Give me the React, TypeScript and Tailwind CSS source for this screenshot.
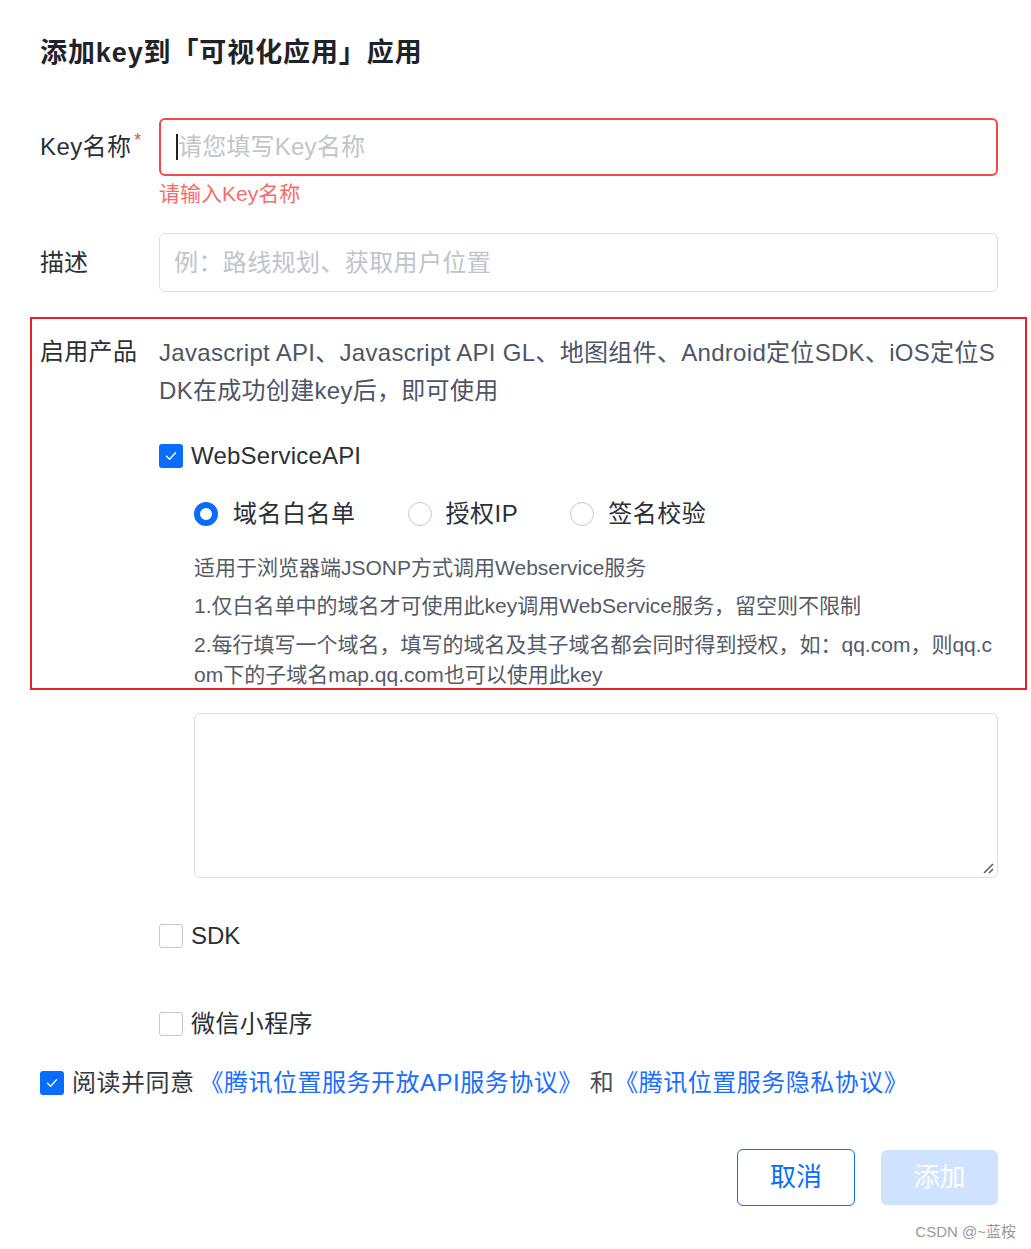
import React from "react";

const FONT = { fontFamily: '"Liberation Sans", Arial, "Noto Sans CJK SC", sans-serif' };

function CheckBox({ checked }: { checked: boolean }) {
  if (checked) {
    return (
      <span className="flex h-[24px] w-[24px] shrink-0 items-center justify-center rounded-[3px] bg-[#0a6cff]">
        <svg width="14" height="14" viewBox="0 0 14 14" fill="none">
          <path d="M2.5 7.2 L5.6 10.2 L11.5 3.8" stroke="white" strokeWidth="1.3" strokeLinecap="round" strokeLinejoin="round" />
        </svg>
      </span>
    );
  }
  return <span className="block h-[24px] w-[24px] shrink-0 rounded-[3px] border border-[#c5c8ce] bg-white" />;
}

function Radio({ checked }: { checked: boolean }) {
  if (checked) {
    return <span className="block h-[24px] w-[24px] shrink-0 rounded-full border-[6px] border-[#0a6cff] bg-white" />;
  }
  return <span className="block h-[24px] w-[24px] shrink-0 rounded-full border border-[#c5c8ce] bg-white" />;
}

export default function App() {
  return (
    <div className="relative h-[1249px] w-[1031px] overflow-hidden bg-white text-[#2b2f36]" style={FONT}>
      <div className="pl-[40px] pr-[33px]">
        {/* Title */}
        <div className="pt-[35px] text-[27px] font-bold leading-[36px] tracking-[0.9px] text-[#1f2329]">
          添加key到「可视化应用」应用
        </div>

        {/* Key name */}
        <div className="mt-[47px] flex">
          <div className="flex h-[58px] w-[119px] shrink-0 items-center text-[24px] tracking-[0.4px]">
            <span>Key名称</span>
            <span className="mb-[14px] ml-[3px] text-[18px] leading-none text-[#f5484b]">*</span>
          </div>
          <div className="flex-1">
            <div className="flex h-[58px] items-center rounded-[6px] border-2 border-[#f5484b] pl-[15px]">
              <span className="block h-[26px] w-[2px] bg-[#1f2329]" />
              <span className="text-[24px] tracking-[0.2px] text-[#c0c4cc]">请您填写Key名称</span>
            </div>
            <div className="mt-[4px] text-[21px] leading-[28px] text-[#f56c6c]">请输入Key名称</div>
          </div>
        </div>

        {/* Description */}
        <div className="mt-[25px] flex">
          <div className="flex h-[59px] w-[119px] shrink-0 items-center text-[24px]">描述</div>
          <div className="flex h-[59px] flex-1 items-center rounded-[6px] border border-[#dcdfe6] pl-[14px] text-[24px] tracking-[0.4px] text-[#c0c4cc]">
            例：路线规划、获取用户位置
          </div>
        </div>

        {/* Products */}
        <div className="mt-[42px] flex">
          <div className="w-[119px] shrink-0 text-[24px] leading-[36px] tracking-[0.3px]">启用产品</div>
          <div className="min-w-0 flex-1">
            <div className="break-all text-[24px] leading-[38px] tracking-[0.3px] text-[#4e5566]">
              Javascript API、Javascript API GL、地图组件、Android定位SDK、iOS定位SDK在成功创建key后，即可使用
            </div>

            <div className="mt-[30px] flex items-center gap-[8px] text-[24px] leading-[32px] tracking-[0.2px]">
              <CheckBox checked />
              <span>WebServiceAPI</span>
            </div>

            <div className="mt-[26px] pl-[35px]">
              <div className="flex items-center text-[24px] leading-[32px] tracking-[0.5px]">
                <div className="flex items-center gap-[15px]">
                  <Radio checked />
                  <span>域名白名单</span>
                </div>
                <div className="ml-[52px] flex items-center gap-[14px]">
                  <Radio checked={false} />
                  <span>授权IP</span>
                </div>
                <div className="ml-[52px] flex items-center gap-[14px]">
                  <Radio checked={false} />
                  <span>签名校验</span>
                </div>
              </div>

              <div className="mt-[23px] break-all text-[21px] leading-[30px] text-[#555b66]">
                <p>适用于浏览器端JSONP方式调用Webservice服务</p>
                <p className="mt-[8px]">1.仅白名单中的域名才可使用此key调用WebService服务，留空则不限制</p>
                <p className="mt-[9px]">2.每行填写一个域名，填写的域名及其子域名都会同时得到授权，如：qq.com，则qq.com下的子域名map.qq.com也可以使用此key</p>
              </div>

              <div className="relative mt-[23px] h-[165px] rounded-[6px] border border-[#dcdfe6]">
                <svg className="absolute bottom-[2px] right-[2px]" width="14" height="14" viewBox="0 0 14 14">
                  <path d="M3 12 L12 3" stroke="#555" strokeWidth="1.5" />
                  <path d="M8 12 L12 8" stroke="#555" strokeWidth="1.5" />
                </svg>
              </div>
            </div>

            <div className="mt-[42px] flex items-center gap-[8px] text-[24px] leading-[32px]">
              <CheckBox checked={false} />
              <span>SDK</span>
            </div>

            <div className="mt-[56px] flex items-center gap-[8px] text-[24px] leading-[32px] tracking-[0.4px]">
              <CheckBox checked={false} />
              <span>微信小程序</span>
            </div>
          </div>
        </div>

        {/* Agreement */}
        <div className="mt-[27px] flex items-center text-[24px] leading-[32px] tracking-[0.5px]">
          <CheckBox checked />
          <span className="ml-[8px] text-[#333840]">阅读并同意</span>
          <span className="ml-[5px] text-[#1a6dff]">《腾讯位置服务开放API服务协议》</span>
          <span className="ml-[7px] text-[#4a4f57]">和</span>
          <span className="text-[#1a6dff]">《腾讯位置服务隐私协议》</span>
        </div>

        {/* Buttons */}
        <div className="mt-[50px] flex items-start justify-end gap-[26px]">
          <button className="flex h-[57px] w-[118px] items-center justify-center rounded-[6px] border border-[#0a6cff] bg-white text-[26px] text-[#0a6cff]">
            取消
          </button>
          <button className="mt-[1px] flex h-[55px] w-[117px] items-center justify-center rounded-[6px] bg-[#cfe2ff] text-[26px] text-white">
            添加
          </button>
        </div>

        <div className="mt-[16px] flex justify-end text-[15px] leading-[20px] text-[#9a9a9a]">
          <span className="mr-[-18px]">CSDN @~蓝桉</span>
        </div>
      </div>

      {/* Annotation rectangle overlay */}
      <div className="pointer-events-none absolute left-[30px] top-[317px] h-[373px] w-[997px] border-2 border-[#e8202a]" />
    </div>
  );
}
